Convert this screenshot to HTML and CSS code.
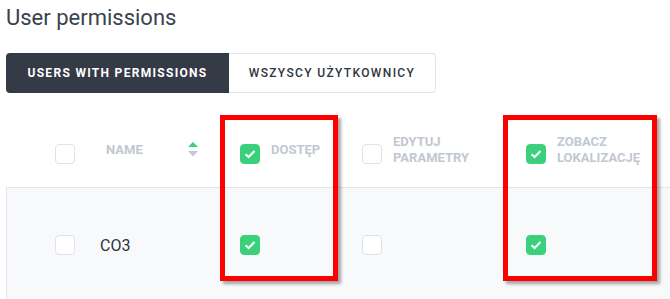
FILE: index.html
```html
<!DOCTYPE html>
<html>
<head>
<meta charset="utf-8">
<link rel="stylesheet" href="styles.css">
</head>
<body>
<div class="page">
  <h1 class="title">User permissions</h1>
  <div class="tabs">
    <div class="tab tab-active">Users with permissions</div>
    <div class="tab">Wszyscy użytkownicy</div>
  </div>
  <div class="table">
    <div class="row head">
      <div class="cell c0"><span class="cb"></span></div>
      <div class="cell c1 name-head">
        <span class="htext">Name</span>
        <svg class="sort" width="10" height="15" viewBox="0 0 10 15"><path d="M5 0 L10 5 L0 5 Z" fill="#3ecf7e"/><path d="M0 9 L10 9 L5 14.5 Z" fill="#c4c8cf"/></svg>
      </div>
      <div class="cell c2"><span class="cb on hcb"><svg width="12" height="10" viewBox="0 0 12 10"><path d="M1.5 5.2 L4.6 8 L10.5 2" fill="none" stroke="#fff" stroke-width="2"/></svg></span><span class="htext">Dostęp</span></div>
      <div class="cell c3"><span class="cb hcb"></span><span class="htext">Edytuj<br>parametry</span></div>
      <div class="cell c4"><span class="cb on hcb"><svg width="12" height="10" viewBox="0 0 12 10"><path d="M1.5 5.2 L4.6 8 L10.5 2" fill="none" stroke="#fff" stroke-width="2"/></svg></span><span class="htext">Zobacz<br>lokalizację</span></div>
    </div>
    <div class="row body-row">
      <div class="cell c0"><span class="cb"></span></div>
      <div class="cell c1 name-cell">CO3</div>
      <div class="cell c2"><span class="cb on"><svg width="12" height="10" viewBox="0 0 12 10"><path d="M1.5 5.2 L4.6 8 L10.5 2" fill="none" stroke="#fff" stroke-width="2"/></svg></span></div>
      <div class="cell c3"><span class="cb"></span></div>
      <div class="cell c4"><span class="cb on"><svg width="12" height="10" viewBox="0 0 12 10"><path d="M1.5 5.2 L4.6 8 L10.5 2" fill="none" stroke="#fff" stroke-width="2"/></svg></span></div>
    </div>
  </div>
  <div class="mark mark-1"></div>
  <div class="mark mark-2"></div>
</div>
</body>
</html>
```
FILE: styles.css
```css
html, body {
  margin: 0;
  padding: 0;
  background: #ffffff;
  overflow: hidden;
}
body {
  font-family: Roboto, "Liberation Sans", sans-serif;
  color: #2d3440;
}
.page {
  position: relative;
  width: 670px;
  height: 299px;
  overflow: hidden;
}
.title {
  margin: 0;
  padding: 6px 0 0 6px;
  font-size: 22px;
  line-height: 24px;
  font-weight: 400;
  color: #3b424e;
}
.tabs {
  display: flex;
  margin: 23px 0 0 6px;
  height: 40px;
}
.tab {
  box-sizing: border-box;
  height: 40px;
  display: flex;
  align-items: center;
  justify-content: center;
  text-transform: uppercase;
  font-size: 12px;
  font-weight: 500;
  letter-spacing: 1.35px;
  color: #2f3540;
  border: 1px solid #dfe5ee;
  border-left: none;
  border-radius: 0 4px 4px 0;
  width: 207px;
}
.tab-active {
  width: 223px;
  background: #343a46;
  color: #ffffff;
  font-weight: 700;
  letter-spacing: 1.3px;
  border: none;
  border-radius: 4px 0 0 4px;
}
.table {
  margin: 22px 0 0 6px;
  width: 760px;
}
.row {
  display: grid;
  grid-template-columns: 89px 130px 122px 164px 255px;
}
.head {
  height: 72px;
}
.body-row {
  height: 114px;
  box-sizing: border-box;
  background: #f8f9fb;
  border-top: 1px solid #e1e6ee;
  border-left: 1px solid #e1e6ee;
}
.cell {
  display: flex;
  align-items: center;
  padding-left: 15px;
}
.c0 {
  padding-left: 49px;
}
.body-row .c0 {
  padding-left: 48px;
}
.name-head {
  padding-left: 11px;
  padding-right: 27px;
}
.name-cell {
  padding-left: 4px;
  font-size: 16px;
  color: #2d3440;
  padding-top: 1px;
}
.body-row .c2, .body-row .c3, .body-row .c4 {
  padding-left: 14px;
}
.htext {
  font-size: 13px;
  line-height: 16px;
  font-weight: 700;
  text-transform: uppercase;
  color: #c2c8d2;
  margin-top: -2px;
}
.c2 .htext, .c3 .htext, .c4 .htext {
  margin-left: 11px;
}
.sort {
  margin-left: auto;
  margin-top: -4px;
}
.cb {
  box-sizing: border-box;
  width: 20px;
  height: 20px;
  border: 1px solid #dde3ec;
  border-radius: 4px;
  background: #ffffff;
  display: flex;
  align-items: center;
  justify-content: center;
  flex-shrink: 0;
}
.c0 .cb {
  margin-top: 6px;
}
.body-row .c0 .cb, .body-row .cb {
  margin-top: 1px;
}
.hcb {
  margin-top: 6px;
}
.cb.on {
  background: #3ad07c;
  border-color: #3ad07c;
}
.mark {
  position: absolute;
  box-sizing: border-box;
  border: 5px solid #ff0000;
  box-shadow: 3px 3px 3px rgba(0, 0, 0, 0.35);
}
.mark-1 {
  left: 220px;
  top: 115px;
  width: 118px;
  height: 166px;
}
.mark-2 {
  left: 503px;
  top: 115px;
  width: 154px;
  height: 166px;
}
```
